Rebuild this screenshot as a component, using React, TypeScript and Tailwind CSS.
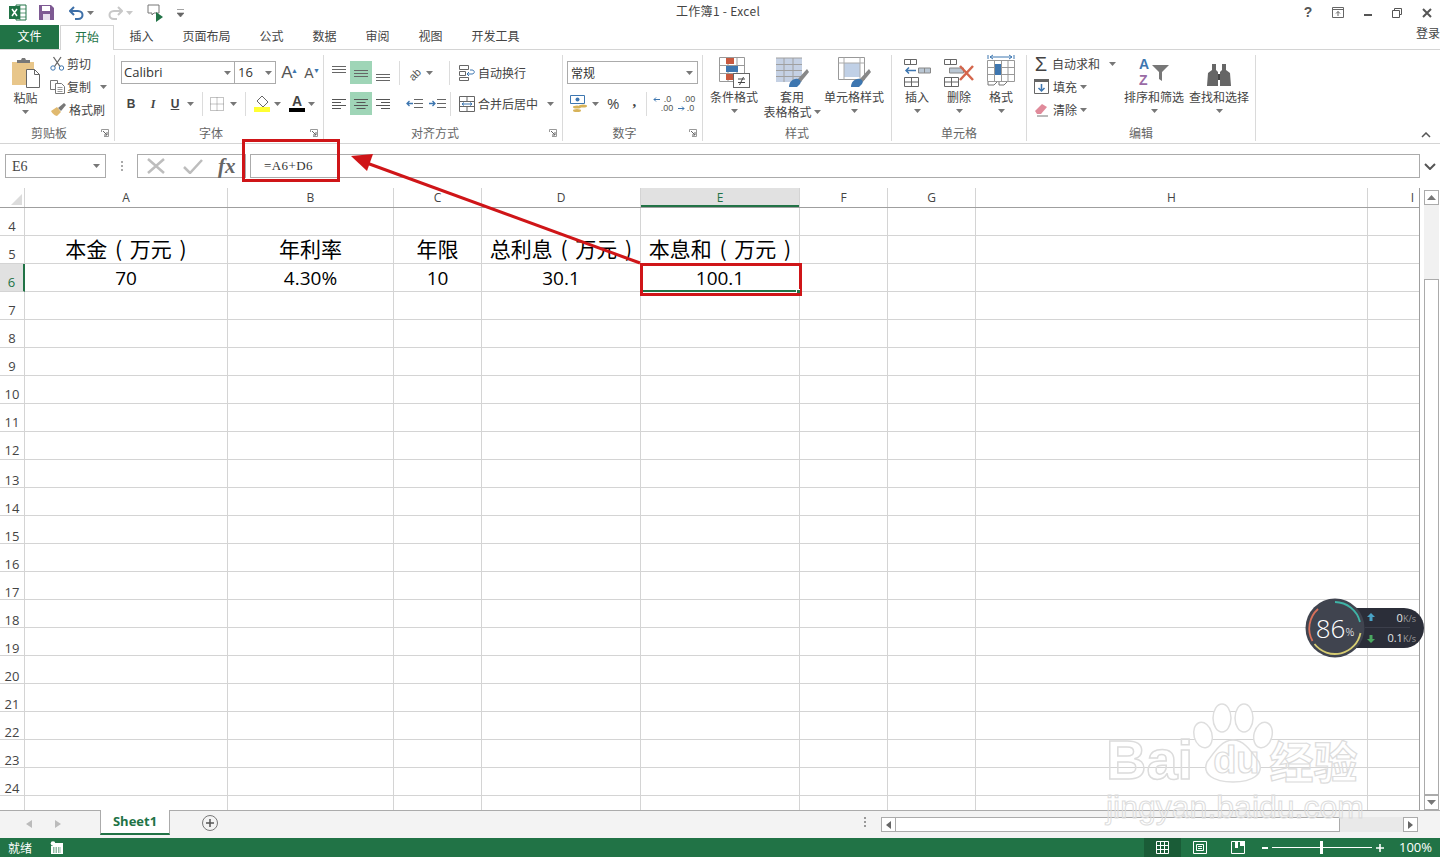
import React from 'react';

const cjk = "font-['Noto_Sans_CJK_SC','Liberation_Sans',sans-serif]";

const Caret = ({ className = '' }: { className?: string }) => (
    <svg width="7" height="4" viewBox="0 0 7 4" className={`shrink-0 ${className}`}>
        <path d="M0 0h7L3.5 4z" fill="#777" />
    </svg>
);

const Sep = ({ h = 24 }: { h?: number }) => <div className="w-px bg-[#dcdcdc]" style={{ height: h }} />;

const Launcher = () => (
    <svg width="8" height="8" viewBox="0 0 8 8" className="absolute right-[5px] bottom-[4px]">
        <path d="M.5 3V.5H7.5M7.5.5V7.5H3" fill="none" stroke="#999" />
        <path d="M2 2l4 4M6 3v3H3" fill="none" stroke="#666" />
    </svg>
);

const Group = ({ label, width, launcher, children }: { label: string; width: number; launcher?: boolean; children: React.ReactNode }) => (
    <div className="relative h-full shrink-0 border-r border-[#dadada] flex flex-col" style={{ width }}>
        <div className="h-[69px] shrink-0">{children}</div>
        <div className={`text-center text-[12px] leading-[16px] text-[#666] mt-px ${launcher ? 'pr-[16px]' : ''}`}>{label}</div>
        {launcher && <Launcher />}
    </div>
);

const Lines = ({ ys, x1 = 0, x2 = 14 }: { ys: number[]; x1?: number; x2?: number }) => (
    <svg width="14" height="16" viewBox="0 0 14 16">
        {ys.map((y) => (
            <path key={y} d={`M${x1} ${y + 0.5}H${x2}`} stroke="#666" />
        ))}
    </svg>
);

const AlignLines = ({ kind }: { kind: 'l' | 'c' | 'r' }) => {
    const rows = [3, 6, 9, 12];
    const lens = [14, 9, 14, 9];
    return (
        <svg width="14" height="16" viewBox="0 0 14 16">
            {rows.map((y, i) => {
                const s = kind === 'l' ? 0 : kind === 'r' ? 14 - lens[i] : (14 - lens[i]) / 2;
                return <path key={y} d={`M${s} ${y + 0.5}h${lens[i]}`} stroke="#555" />;
            })}
        </svg>
    );
};

const AlignCell = ({ active, children }: { active?: boolean; children: React.ReactNode }) => (
    <div className={`w-[22px] h-[23px] flex items-center justify-center ${active ? 'bg-[#9fd5b7]' : ''}`}>{children}</div>
);

const BigBtn = ({ icon, lines, width, caretInline }: { icon: React.ReactNode; lines: string[]; width: number; caretInline?: boolean }) => (
    <div className="flex flex-col items-center shrink-0" style={{ width }}>
        <div className="h-[32px] flex items-end justify-center">{icon}</div>
        <div className="text-[12px] leading-[15px] text-[#444] whitespace-nowrap mt-[1px] text-center">
            {lines.map((l, i) => (
                <div key={l} className="flex items-center justify-center gap-[2px]">
                    {l}
                    {caretInline && i === lines.length - 1 && <Caret />}
                </div>
            ))}
        </div>
        {!caretInline && <Caret className="mt-[5px]" />}
    </div>
);

const CondIcon = () => (
    <svg width="32" height="32" viewBox="0 0 32 32">
        <path d="M1.5 1.5h25v24h-25zM10 1.5v24M19 1.5v24M1.5 9.500h25M1.500 17.500h25" fill="none" stroke="#999" />
        <rect x="8" y="2" width="8" height="6" fill="#c8593f" />
        <rect x="8" y="10" width="12" height="6" fill="#3d76b0" />
        <rect x="8" y="18" width="7" height="6" fill="#c8593f" />
        <rect x="15.500" y="17.500" width="16" height="14" fill="#fff" stroke="#666" />
        <path d="M20 23h7M20 26.500h7M25.500 21l-4 8" stroke="#444" fill="none" />
    </svg>
);

const Brush = () => (
    <>
        <path d="M32 13L22 24l3 3 9-11z" fill="#888" />
        <path d="M14 31c0-5 4-9 9-8 3 1 3 3 2 5l-3 3z" fill="#3d76b0" />
    </>
);

const TableStyleIcon = () => (
    <svg width="34" height="32" viewBox="0 0 34 32">
        <rect x="1" y="2" width="26" height="24" fill="#c5d1e4" />
        <path d="M1 8.500h26M1 14.500h26M1 20.500h26M9 2v24M18 2v24M1 2h26" stroke="#a0a0a0" fill="none" />
        <Brush />
    </svg>
);

const CellStyleIcon = () => (
    <svg width="34" height="32" viewBox="0 0 34 32">
        <path d="M1.500 1.500h26v22h-26z" fill="#fff" stroke="#999" />
        <rect x="7" y="7" width="16" height="14" fill="#c0d0e6" />
        <path d="M7 1.500v22M23 1.500v22M1.500 7h26" stroke="#aaa" />
        <Brush />
    </svg>
);

const InsertIcon = () => (
    <svg width="28" height="30" viewBox="0 0 28 30">
        <path d="M1.500 1.500h12v5h-12zM7.500 1.500v5M1.500 19.500h14v9h-14zM8.500 19.500v9M1.500 24h14" fill="none" stroke="#666" />
        <path d="M13 12.500H3M6 9.500l-3 3 3 3" fill="none" stroke="#3d76b0" strokeWidth="1.500" />
        <path d="M15.500 10h12v5h-12z" fill="#b9c6d3" stroke="#888" />
        <path d="M21.500 10v5" stroke="#888" />
    </svg>
);

const DeleteIcon = () => (
    <svg width="32" height="30" viewBox="0 0 32 30">
        <path d="M1.500 1.500h12v5h-12zM7.500 1.500v5M1.500 19.500h14v9h-14zM8.500 19.500v9M1.500 24h14" fill="none" stroke="#666" />
        <path d="M6.500 10h14v5h-14z" fill="#b9c6d3" stroke="#888" />
        <path d="M17 8l13 14M30 8L17 22" stroke="#d4664c" strokeWidth="2.500" />
    </svg>
);

const FormatIcon = () => (
    <svg width="28" height="34" viewBox="0 0 28 34">
        <path d="M.5 6.500h27v21H.5zM7.500 6.500v21M14.500 6.500v21M21 6.500v21M.5 13.500h27M.5 20.500h27" fill="none" stroke="#999" />
        <rect x="8" y="10" width="6" height="11" fill="#3d76b0" />
        <path d="M1 1v4M27 1v4M3 3h22M3 3l3-2M3 3l3 2M25 3l-3-2M25 3l-3 2" fill="none" stroke="#3d76b0" />
        <path d="M1 28v3h6l3-3M12 28v3h5l3-3" fill="none" stroke="#777" />
    </svg>
);

const SortIcon = () => (
    <svg width="32" height="32" viewBox="0 0 32 32">
        <path d="M14 9h17l-7 7v9l-3-2v-7z" fill="#777" />
        <text x="1" y="13" fontSize="14" fontWeight="700" fill="#3d76b0" fontFamily="'Liberation Sans',sans-serif">A</text>
        <text x="1" y="29" fontSize="14" fontWeight="700" fill="#9a6ba5" fontFamily="'Liberation Sans',sans-serif">Z</text>
    </svg>
);

const BinocularIcon = () => (
    <svg width="26" height="26" viewBox="0 0 26 26">
        <path d="M1 24l1-13 4-3V2h4v6l2 2v14H1zM25 24l-1-13-4-3V2h-4v6l-2 2v14h11z" fill="#666" />
        <path d="M12 12h2v6h-2z" fill="#444" />
    </svg>
);

const PasteIcon = () => (
    <svg width="30" height="32" viewBox="0 0 30 32">
        <rect x="1" y="5" width="22" height="23" fill="#e8c68a" />
        <path d="M6 5V3h4l1-2h3l1 2h4v3H6z" fill="#777" />
        <path d="M15.500 12.500h8l5 5v13h-13z" fill="#fff" stroke="#666" />
        <path d="M23.500 12.500v5h5" fill="none" stroke="#666" />
    </svg>
);

const ScissorsIcon = () => (
    <svg width="15" height="15" viewBox="0 0 15 15">
        <circle cx="3" cy="12" r="2.200" fill="none" stroke="#3d76b0" />
        <circle cx="11.500" cy="12" r="2.200" fill="none" stroke="#3d76b0" />
        <path d="M4.500 10.500L11 1M10 10.500L3.500 1" stroke="#666" strokeWidth="1.300" />
    </svg>
);

const CopyIcon = () => (
    <svg width="15" height="15" viewBox="0 0 15 15">
        <path d="M.5 1.500h7v9h-7z" fill="#fff" stroke="#777" />
        <path d="M5.500 4.500h6l3 3v7h-9z" fill="#fff" stroke="#777" />
        <path d="M7.500 8.500h5M7.500 10.500h5M7.500 12.500h5" stroke="#999" />
    </svg>
);

const PainterIcon = () => (
    <svg width="17" height="15" viewBox="0 0 17 15">
        <path d="M8 6l6-5 2 2-5 6z" fill="#777" />
        <path d="M1 9l6-4 4 5-4 4c-2 0-5-3-6-5z" fill="#e0b96f" />
    </svg>
);

const WrapIcon = () => (
    <svg width="16" height="16" viewBox="0 0 16 16">
        <path d="M.5 .5h9v4h-9zM.5 6.500h6v4h-6zM.5 12.500h9v3h-9z" fill="none" stroke="#666" />
        <path d="M8 9h5c3 0 3-4 0-4h-2M10 7L8 9l2 2" fill="none" stroke="#3d76b0" />
    </svg>
);

const MergeIcon = () => (
    <svg width="16" height="16" viewBox="0 0 16 16">
        <path d="M.5 .5h15v15H.5zM.5 5.500h15M.5 10.500h15M8 .5v5M8 10.500v5" fill="none" stroke="#666" />
        <path d="M3 8h10M5 6.500L3 8l2 1.500M11 6.500L13 8l-2 1.500" fill="none" stroke="#3d76b0" />
    </svg>
);

const IndentIcon = ({ dir }: { dir: 'l' | 'r' }) => (
    <svg width="17" height="14" viewBox="0 0 17 14">
        <path d="M8 2.500h9M8 6.500h9M8 10.500h9" stroke="#666" />
        {dir === 'l' ? (
            <path d="M7 6.500H1M3.500 4L1 6.500 3.500 9" fill="none" stroke="#3d76b0" strokeWidth="1.300" />
        ) : (
            <path d="M0 6.500h6M3.500 4L6 6.500 3.500 9" fill="none" stroke="#3d76b0" strokeWidth="1.300" />
        )}
    </svg>
);

const MoneyIcon = () => (
    <svg width="18" height="18" viewBox="0 0 18 18">
        <path d="M.5 .5h14v8H.5z" fill="#fff" stroke="#3d76b0" />
        <circle cx="7.500" cy="4.500" r="2" fill="#3d76b0" />
        <ellipse cx="7" cy="12" rx="4" ry="1.500" fill="#d7b35a" />
        <ellipse cx="7" cy="15.500" rx="4" ry="1.500" fill="#d7b35a" />
        <ellipse cx="13" cy="11" rx="4" ry="1.500" fill="#d7b35a" />
    </svg>
);

const DecimalIcon = ({ up }: { up: boolean }) => (
    <div className="relative w-[20px] h-[17px] text-[9px] leading-[8px] text-[#555] font-['Liberation_Sans',sans-serif]">
        {up ? (
            <>
                <span className="absolute right-[2px] top-0">.0</span>
                <span className="absolute right-0 top-[9px]">.00</span>
                <svg width="7" height="7" viewBox="0 0 7 7" className="absolute left-0 top-[1px]">
                    <path d="M7 3.500H1M3 1.500L1 3.500l2 2" fill="none" stroke="#3d76b0" />
                </svg>
            </>
        ) : (
            <>
                <span className="absolute right-0 top-0">.00</span>
                <span className="absolute right-[1px] top-[9px]">.0</span>
                <svg width="7" height="7" viewBox="0 0 7 7" className="absolute left-[3px] top-[10px]">
                    <path d="M0 3.500h6M4 1.500l2 2-2 2" fill="none" stroke="#3d76b0" />
                </svg>
            </>
        )}
    </div>
);

const Ribbon = () => (
    <div className={`h-[94px] flex items-stretch pt-[5px] pb-[2px] border-b border-[#d4d4d4] ${cjk} relative`}>
        {/* 剪贴板 */}
        <Group label="剪贴板" width={115} launcher>
            <div className="flex">
                <div className="w-[50px] flex flex-col items-center pl-[1px] pt-[2px]">
                    <PasteIcon />
                    <div className="text-[12px] leading-[16px] text-[#444] mt-[1px]">粘贴</div>
                    <Caret className="mt-[4px]" />
                </div>
                <div className="flex flex-col text-[12px] text-[#444] -mt-[3px]">
                    <div className="h-[23px] flex items-center gap-[2px]"><ScissorsIcon />剪切</div>
                    <div className="h-[23px] flex items-center gap-[2px]"><CopyIcon />复制<Caret className="ml-[7px]" /></div>
                    <div className="h-[23px] flex items-center gap-[2px]"><PainterIcon />格式刷</div>
                </div>
            </div>
        </Group>
        {/* 字体 */}
        <Group label="字体" width={209} launcher>
            <div className="pl-[6px] pt-[6px]">
                <div className="flex items-center h-[23px]">
                    <div className="w-[114px] h-[23px] border border-[#ababab] flex items-center justify-between pl-[2px] pr-[3px] text-[13px] text-[#333] font-['Open_Sans',sans-serif]">Calibri<Caret /></div>
                    <div className="w-[41px] h-[23px] border border-l-0 border-[#ababab] flex items-center justify-between pl-[3px] pr-[3px] text-[13px] text-[#333] font-['Open_Sans',sans-serif]">16<Caret /></div>
                    <span className="w-[22px] text-center text-[17px] leading-[20px] text-[#555] font-['Liberation_Sans',sans-serif] relative">A<span className="absolute top-[-2px] right-[0px] text-[7px] text-[#3d76b0]">▲</span></span>
                    <span className="w-[22px] text-center text-[14px] leading-[20px] text-[#555] font-['Liberation_Sans',sans-serif] relative">A<span className="absolute top-[-2px] right-[0px] text-[7px] text-[#3d76b0]">▼</span></span>
                </div>
                <div className="flex items-center h-[23px] mt-[8px] pl-[4px] text-[#444] font-['Liberation_Sans',sans-serif] text-[12px]">
                    <span className="w-[12px] text-center font-bold">B</span>
                    <span className="w-[12px] text-center italic ml-[10px] font-['Liberation_Serif',serif] font-bold">I</span>
                    <span className="w-[12px] text-center underline font-bold ml-[10px]">U</span>
                    <Caret className="ml-[6px]" />
                    <div className="ml-[8px]"><Sep /></div>
                    <svg width="14" height="14" viewBox="0 0 14 14" className="ml-[7px]">
                        <path d="M.5 .5h13v13H.5zM7 .5v13M.5 7h13" fill="none" stroke="#888" strokeDasharray="1 1" />
                    </svg>
                    <Caret className="ml-[6px]" />
                    <div className="ml-[8px]"><Sep /></div>
                    <svg width="17" height="17" viewBox="0 0 17 17" className="ml-[8px]">
                        <rect x="0" y="12" width="16" height="5" fill="#ffff33" />
                        <path d="M8 1l6 6-5 5-6-6z" fill="#fff" stroke="#666" />
                    </svg>
                    <Caret className="ml-[3px]" />
                    <div className="ml-[8px] flex flex-col items-center w-[16px]">
                        <span className="text-[14px] leading-[13px] font-bold text-[#444]">A</span>
                        <div className="w-[16px] h-[4px] bg-black" />
                    </div>
                    <Caret className="ml-[3px]" />
                </div>
            </div>
        </Group>
        {/* 对齐方式 */}
        <Group label="对齐方式" width={239} launcher>
            <div className="pl-[4px] pt-[6px]">
                <div className="flex items-center h-[23px]">
                    <AlignCell><Lines ys={[1, 4, 7]} /></AlignCell>
                    <AlignCell active><Lines ys={[5, 8, 11]} /></AlignCell>
                    <AlignCell><Lines ys={[9, 12, 15]} /></AlignCell>
                    <div className="ml-[5px]"><Sep /></div>
                    <span className="ml-[8px] w-[16px] text-[11px] leading-[16px] text-[#555] -rotate-45 font-['Liberation_Sans',sans-serif]">ab</span>
                    <Caret className="ml-[2px]" />
                    <div className="ml-[16px]"><Sep /></div>
                    <div className="ml-[9px] flex items-center gap-[3px] text-[12px] text-[#444] whitespace-nowrap"><WrapIcon />自动换行</div>
                </div>
                <div className="flex items-center h-[23px] mt-[8px]">
                    <AlignCell><AlignLines kind="l" /></AlignCell>
                    <AlignCell active><AlignLines kind="c" /></AlignCell>
                    <AlignCell><AlignLines kind="r" /></AlignCell>
                    <div className="ml-[5px] w-px h-[24px]" />
                    <div className="ml-[6px]"><IndentIcon dir="l" /></div>
                    <div className="ml-[6px]"><IndentIcon dir="r" /></div>
                    <div className="ml-[4px]"><Sep /></div>
                    <div className="ml-[8px] flex items-center gap-[3px] text-[12px] text-[#444] whitespace-nowrap"><MergeIcon />合并后居中<Caret className="ml-[6px]" /></div>
                </div>
            </div>
        </Group>
        {/* 数字 */}
        <Group label="数字" width={140} launcher>
            <div className="pl-[4px] pt-[6px]">
                <div className="w-[131px] h-[23px] border border-[#ababab] flex items-center justify-between pl-[3px] pr-[4px] text-[12px] text-[#333]">常规<Caret /></div>
                <div className="flex items-center h-[23px] mt-[8px] pl-[3px] text-[#444]">
                    <MoneyIcon />
                    <Caret className="ml-[4px]" />
                    <span className="ml-[8px] text-[15px] font-['Open_Sans',sans-serif]">%</span>
                    <span className="ml-[13px] text-[15px] font-bold font-['Liberation_Serif',serif] -mt-[5px]">,</span>
                    <div className="ml-[10px]"><Sep /></div>
                    <div className="ml-[6px]"><DecimalIcon up /></div>
                    <div className="ml-[2px]"><DecimalIcon up={false} /></div>
                </div>
            </div>
        </Group>
        {/* 样式 */}
        <Group label="样式" width={189}>
            <div className="flex pl-[1px] pt-[1px]">
                <BigBtn icon={<CondIcon />} lines={['条件格式']} width={60} />
                <BigBtn icon={<TableStyleIcon />} lines={['套用', '表格格式']} width={56} caretInline />
                <BigBtn icon={<CellStyleIcon />} lines={['单元格样式']} width={68} />
            </div>
        </Group>
        {/* 单元格 */}
        <Group label="单元格" width={135}>
            <div className="flex pl-[4px] pt-[1px]">
                <BigBtn icon={<InsertIcon />} lines={['插入']} width={42} />
                <BigBtn icon={<DeleteIcon />} lines={['删除']} width={42} />
                <BigBtn icon={<FormatIcon />} lines={['格式']} width={42} />
            </div>
        </Group>
        {/* 编辑 */}
        <Group label="编辑" width={229}>
            <div className="flex pl-[6px] pt-[1px]">
                <div className="w-[88px] flex flex-col text-[12px] text-[#444] -mt-[4px]">
                    <div className="h-[23px] flex items-center gap-[3px]">
                        <span className="w-[16px] text-[20px] leading-[20px] text-[#444] text-center font-['Liberation_Sans',sans-serif]">Σ</span>自动求和<Caret className="ml-[6px]" />
                    </div>
                    <div className="h-[23px] flex items-center gap-[3px]">
                        <svg width="15" height="15" viewBox="0 0 15 15" className="mx-[1px]">
                            <path d="M.5 .5h14v14H.5z" fill="#fff" stroke="#666" />
                            <rect width="15" height="3" fill="#666" />
                            <path d="M7.500 5v7M4.500 9l3 3 3-3" fill="none" stroke="#3d76b0" strokeWidth="1.500" />
                        </svg>
                        填充<Caret />
                    </div>
                    <div className="h-[23px] flex items-center gap-[3px]">
                        <svg width="15" height="15" viewBox="0 0 15 15" className="mx-[1px]">
                            <path d="M1 9l7-7 5 3-6 7H3z" fill="#e08a9a" />
                            <path d="M3 14h11" stroke="#777" />
                        </svg>
                        清除<Caret />
                    </div>
                </div>
                <BigBtn icon={<SortIcon />} lines={['排序和筛选']} width={66} />
                <BigBtn icon={<BinocularIcon />} lines={['查找和选择']} width={64} />
            </div>
        </Group>
        <svg width="10" height="6" viewBox="0 0 10 6" className="absolute right-[9px] bottom-[5px]">
            <path d="M1 5l4-4 4 4" fill="none" stroke="#555" strokeWidth="1.500" />
        </svg>
    </div>
);

const TitleBar = () => (
    <div className={`h-[25px] flex items-center relative ${cjk}`}>
        <svg width="18" height="17" viewBox="0 0 18 17" className="ml-[9px]">
            <path d="M7 1h10v15H7z" fill="#fff" stroke="#217346" />
            <path d="M11 1v15M7 5h10M7 9h10M7 13h10" stroke="#217346" strokeWidth=".7" />
            <rect x="0" y="2" width="11" height="13" fill="#217346" />
            <path d="M3 5l5 7M8 5l-5 7" stroke="#fff" strokeWidth="1.500" />
        </svg>
        <svg width="15" height="15" viewBox="0 0 15 15" className="ml-[12px]">
            <path d="M0 0h12l3 3v12H0z" fill="#7e5a93" />
            <rect x="3" y="1" width="8" height="5" fill="#fff" />
            <rect x="4" y="9" width="7" height="6" fill="#e8e0ee" />
        </svg>
        <svg width="15" height="14" viewBox="0 0 15 14" className="ml-[15px]">
            <path d="M1 5h8c6 0 6 8 0 8H6" fill="none" stroke="#3d6fa8" strokeWidth="2" />
            <path d="M5 1L1 5l4 4" fill="none" stroke="#3d6fa8" strokeWidth="2" />
        </svg>
        <Caret className="ml-[3px]" />
        <svg width="15" height="14" viewBox="0 0 15 14" className="ml-[14px]">
            <path d="M14 5H6c-6 0-6 8 0 8h3" fill="none" stroke="#c8c8c8" strokeWidth="2" />
            <path d="M10 1l4 4-4 4" fill="none" stroke="#c8c8c8" strokeWidth="2" />
        </svg>
        <Caret className="ml-[3px] opacity-40" />
        <svg width="17" height="18" viewBox="0 0 17 18" className="ml-[14px]">
            <path d="M1 1h11v8H7l-2 2V9H1z" fill="#fff" stroke="#777" />
            <path d="M9 8l7 5-7 5z" fill="#217346" />
        </svg>
        <svg width="7" height="8" viewBox="0 0 7 8" className="ml-[13px]">
            <path d="M0 .5h7M0 4h7L3.500 8z" fill="#666" stroke="#666" strokeWidth=".6" />
        </svg>
        <div className="absolute left-[676px] top-[2px] text-[12px] tracking-[0.3px] leading-[18px] text-[#444]">工作簿1 - Excel</div>
        <div className="ml-auto flex items-center text-[#555]">
            <span className="w-[30px] text-center text-[14px] font-bold font-['Liberation_Sans',sans-serif]">?</span>
            <svg width="12" height="11" viewBox="0 0 12 11" className="mx-[9px]">
                <path d="M.5 .5h11v10H.5zM.5 2.500h11M6 9V4.500M4 6.500l2-2 2 2" fill="none" stroke="#666" />
            </svg>
            <div className="w-[8px] h-[2px] bg-[#555] mx-[11px] mt-[5px]" />
            <svg width="10" height="10" viewBox="0 0 10 10" className="mx-[9px]">
                <path d="M2.500 2.500V.5h7v6h-2M.5 2.500h7v7h-7z" fill="none" stroke="#555" />
            </svg>
            <svg width="10" height="10" viewBox="0 0 10 10" className="ml-[11px] mr-[8px]">
                <path d="M1 1l8 8M9 1L1 9" stroke="#555" strokeWidth="2" />
            </svg>
        </div>
    </div>
);

const TabRow = () => {
    const tabs = ['插入', '页面布局', '公式', '数据', '审阅', '视图', '开发工具'];
    return (
        <div className={`h-[25px] flex items-stretch border-b border-[#d4d4d4] text-[12px] text-[#444] ${cjk}`}>
            <div className="w-[59px] bg-[#217346] text-white flex items-center justify-center pb-[3px]">文件</div>
            <div className="w-[54px] ml-[1px] -mb-px bg-white border border-b-0 border-[#d4d4d4] text-[#217346] flex items-center justify-center pb-[3px]">开始</div>
            <div className="flex ml-[1px]">
                {tabs.map((t) => (
                    <div key={t} className="px-[14.5px] flex items-center pb-[3px]">{t}</div>
                ))}
            </div>
            <div className="ml-auto pr-[0px] -mt-[9px] flex items-center">登录</div>
        </div>
    );
};

const FormulaBar = () => (
    <div className="h-[24px] mt-[10px] flex items-stretch pl-[5px] pr-[0px]">
        <div className="w-[101px] border border-[#ababab] flex items-center justify-between pl-[6px] pr-[5px] font-['Liberation_Serif',serif] text-[14px] text-[#444]">E6<Caret /></div>
        <div className="w-[31px] flex flex-col items-center justify-center gap-[2px]">
            <div className="w-[2px] h-[2px] bg-[#aaa]" />
            <div className="w-[2px] h-[2px] bg-[#aaa]" />
            <div className="w-[2px] h-[2px] bg-[#aaa]" />
        </div>
        <div className="w-[109px] border border-[#ababab] flex items-center pl-[9px]">
            <svg width="18" height="16" viewBox="0 0 18 16" className="shrink-0"><path d="M1 1l16 14M17 1L1 15" stroke="#bdbdbd" strokeWidth="2.500" /></svg>
            <svg width="20" height="16" viewBox="0 0 20 16" className="ml-[18px] shrink-0"><path d="M1 9l6 6L19 2" fill="none" stroke="#bdbdbd" strokeWidth="2.500" /></svg>
            <span className="ml-[15px] text-[21px] leading-[21px] italic font-bold text-[#666] font-['Liberation_Serif',serif]">fx</span>
        </div>
        <div className="ml-[4px] flex-1 border border-[#ababab] flex items-center pl-[13px] font-['Liberation_Serif',serif] tracking-[0.4px] text-[13px] text-[#333]">=A6+D6</div>
        <div className="w-[20px] flex items-center justify-center">
            <svg width="12" height="7" viewBox="0 0 12 7"><path d="M1 1l5 5 5-5" fill="none" stroke="#555" strokeWidth="2" /></svg>
        </div>
    </div>
);

const columns = ['A', 'B', 'C', 'D', 'E', 'F', 'G', 'H', 'I'];
const rowNums = Array.from({ length: 21 }, (_, i) => i + 4);
const rowData: Record<number, string[]> = {
    5: ['本金 ( 万元 )', '年利率', '年限', '总利息 ( 万元 )', '本息和 ( 万元 )'],
    6: ['70', '4.30%', '10', '30.1', '100.1'],
};
const template = 'grid-cols-[25px_203px_166px_88px_159px_159px_88px_88px_392px_52px]';

const Sheet = () => (
    <div className="flex-1 min-h-0 flex mt-[10px] overflow-hidden">
        <div className="w-[1420px] shrink-0 overflow-hidden border-r border-[#9f9f9f]">
            <div className={`grid ${template} h-[20px] border-b border-[#9f9f9f] bg-white`}>
                <div className="relative border-r border-[#d4d4d4]">
                    <div className="absolute right-[2px] bottom-[2px] w-0 h-0 border-l-[11px] border-l-transparent border-b-[11px] border-b-[#dcdcdc]" />
                </div>
                {columns.map((c) => (
                    <div key={c} className={`flex items-center pt-[1px] text-[12px] font-['Open_Sans',sans-serif] border-r border-[#d4d4d4] ${c === 'I' ? 'justify-end pr-[5px]' : 'justify-center'} ${c === 'E' ? 'bg-[#e1e1e1] text-[#217346] shadow-[inset_0_-2px_0_#217346]' : 'text-[#444]'}`}>{c}</div>
                ))}
            </div>
            {rowNums.map((r) => (
                <div key={r} className={`grid ${template} h-[28px]`}>
                    <div className={`flex items-center justify-center text-[13px] leading-[14px] border-r border-b font-['Open_Sans',sans-serif] ${r >= 13 ? 'pt-[13px]' : 'pt-[9px]'} ${r === 6 ? 'bg-[#e1e1e1] text-[#217346] border-r-[#217346] border-r-2 border-b-[#d4d4d4]' : 'text-[#444] border-[#d4d4d4]'}`}>{r}</div>
                    {columns.map((c, i) => {
                        const v = rowData[r]?.[i];
                        return (
                            <div key={c} className={`border-r border-b border-[#d4d4d4] flex items-center justify-center whitespace-nowrap text-black ${r === 5 ? `text-[21px] leading-[24px] pb-[3px] [word-spacing:3px] ${cjk}` : "text-[19px] leading-[24px] font-['Open_Sans',sans-serif]"}`}>
                                {v}
                            </div>
                        );
                    })}
                </div>
            ))}
            <div className={`grid ${template} h-[14px]`}>
                <div className="border-r border-[#d4d4d4]" />
                {columns.map((c) => <div key={c} className="border-r border-[#d4d4d4]" />)}
            </div>
        </div>
        {/* vertical scrollbar */}
        <div className="flex-1 flex flex-col items-center pt-[2px] pl-[2px]">
            <div className="h-[15px] w-[15px] bg-white border border-[#ababab] flex items-center justify-center shrink-0">
                <svg width="9" height="5" viewBox="0 0 9 5"><path d="M0 5h9L4.500 0z" fill="#777" /></svg>
            </div>
            <div className="h-[74px] w-[15px] bg-[#f1f1f1] shrink-0" />
            <div className="w-[15px] flex-1 bg-white border border-[#ababab]" />
            <div className="h-[15px] w-[15px] bg-white border border-[#ababab] flex items-center justify-center shrink-0">
                <svg width="9" height="5" viewBox="0 0 9 5"><path d="M0 0h9L4.500 5z" fill="#777" /></svg>
            </div>
        </div>
    </div>
);

const SheetTabs = () => (
    <div className="h-[28px] flex items-start bg-[#f3f3f3] border-t border-[#ababab]">
        <svg width="6" height="8" viewBox="0 0 6 8" className="ml-[26px] mt-[9px]"><path d="M6 0v8L0 4z" fill="#bbb" /></svg>
        <svg width="6" height="8" viewBox="0 0 6 8" className="ml-[23px] mt-[9px]"><path d="M0 0v8l6-4z" fill="#bbb" /></svg>
        <div className="ml-[39px] -mt-px w-[70px] h-[25px] bg-white border-x border-[#ababab] border-b-2 border-b-[#217346] flex items-center justify-center text-[13px] font-bold text-[#217346] font-['Open_Sans',sans-serif]">Sheet1</div>
        <div className="ml-[32px] mt-[4px] w-[16px] h-[16px] rounded-full border border-[#777] flex items-center justify-center text-[#555]">
            <svg width="8" height="8" viewBox="0 0 8 8"><path d="M4 0v8M0 4h8" stroke="#555" strokeWidth="1.500" /></svg>
        </div>
        <div className="ml-[646px] mt-[6px] flex flex-col gap-[2px]">
            <div className="w-[2px] h-[2px] bg-[#999]" />
            <div className="w-[2px] h-[2px] bg-[#999]" />
            <div className="w-[2px] h-[2px] bg-[#999]" />
        </div>
        <div className="ml-[15px] mt-[6px] w-[537px] h-[15px] flex">
            <div className="w-[15px] h-[15px] bg-white border border-[#ababab] flex items-center justify-center">
                <svg width="5" height="8" viewBox="0 0 5 8"><path d="M5 0v8L0 4z" fill="#666" /></svg>
            </div>
            <div className="w-[444px] h-[15px] bg-white border-y border-r border-[#ababab]" />
            <div className="flex-1 bg-[#e9e9e9]" />
            <div className="w-[15px] h-[15px] bg-white border border-[#ababab] flex items-center justify-center">
                <svg width="5" height="8" viewBox="0 0 5 8"><path d="M0 0v8l5-4z" fill="#666" /></svg>
            </div>
        </div>
    </div>
);

const StatusBar = () => (
    <div className={`h-[19px] bg-[#217346] flex items-center text-white text-[12px] ${cjk}`}>
        <span className="ml-[8px]">就绪</span>
        <svg width="13" height="13" viewBox="0 0 13 13" className="ml-[18px]">
            <path d="M3 2h10v11H1V5h2z" fill="#fff" />
            <circle cx="3" cy="2.500" r="2.300" fill="#fff" />
            <path d="M3 7h8M3 9h8M3 11h8" stroke="#217346" strokeDasharray="1.500 1" />
        </svg>
        <div className="ml-auto flex items-center h-full">
            <div className="w-[37px] h-full bg-[#1a5c37] flex items-center justify-center">
                <svg width="13" height="13" viewBox="0 0 13 13"><path d="M.5 .5h12v12H.5zM4.500 .5v12M8.500 .5v12M.5 4.500h12M.5 8.500h12" fill="none" stroke="#fff" /></svg>
            </div>
            <div className="w-[38px] flex items-center justify-center">
                <svg width="14" height="13" viewBox="0 0 14 13"><path d="M.5 .5h13v12H.5z" fill="none" stroke="#fff" /><path d="M3.500 3.500h7v6h-7zM5 5.500h4M5 7.500h4" fill="none" stroke="#fff" /></svg>
            </div>
            <div className="w-[38px] flex items-center justify-center">
                <svg width="14" height="13" viewBox="0 0 14 13"><path d="M.5 .5h13v12H.5z" fill="none" stroke="#fff" /><rect x="4" y="0" width="3" height="7" fill="#fff" /><rect x="9" y="0" width="5" height="5" fill="#fff" /></svg>
            </div>
            <div className="ml-[5px] w-[6px] h-[2px] bg-white" />
            <div className="ml-[4px] w-[100px] h-px bg-white relative">
                <div className="absolute left-[48px] -top-[6px] w-[3px] h-[13px] bg-white" />
            </div>
            <svg width="8" height="8" viewBox="0 0 8 8" className="ml-[4px]"><path d="M4 0v8M0 4h8" stroke="#fff" strokeWidth="1.600" /></svg>
            <span className="w-[56px] text-right pr-[8px] text-[13px] font-['Open_Sans',sans-serif]">100%</span>
        </div>
    </div>
);

const SpeedWidget = () => (
    <div className="absolute left-[1305px] top-[598px] w-[119px] h-[60px]">
        <div className="absolute left-[28px] top-[10px] w-[91px] h-[40px] rounded-full bg-[#2b2e39]" />
        <div className="absolute left-[63px] top-[13px] w-[48px] text-right text-[11px] leading-[14px] text-[#e4e4e4] font-['Open_Sans',sans-serif]">0<span className="text-[#999] text-[9px]">K/s</span></div>
        <div className="absolute left-[63px] top-[33px] w-[48px] text-right text-[11px] leading-[14px] text-[#e4e4e4] font-['Open_Sans',sans-serif]">0.1<span className="text-[#999] text-[9px]">K/s</span></div>
        <div className="absolute left-[60px] top-[29px] w-[45px] h-px bg-[#3c3f4b]" />
        <svg width="8" height="8" viewBox="0 0 8 8" className="absolute left-[62px] top-[15px]"><path d="M4 0L0 4h2.500v4h3V4H8z" fill="#4aa3c7" /></svg>
        <svg width="8" height="8" viewBox="0 0 8 8" className="absolute left-[62px] top-[37px]"><path d="M4 8L0 4h2.500V0h3v4H8z" fill="#4aa860" /></svg>
        <svg width="60" height="60" viewBox="0 0 60 60" className="absolute left-0 top-0">
            <circle cx="30" cy="30" r="29.500" fill="#40444f" />
            <path d="M30 4a26 26 0 0 1 25 20" fill="none" stroke="#3fb3a6" strokeWidth="1.800" />
            <path d="M55.500 35a26 26 0 0 1-46 11" fill="none" stroke="#d6cc72" strokeWidth="1.800" />
            <path d="M7.500 43A26 26 0 0 1 13 11" fill="none" stroke="#d8705a" strokeWidth="1.800" />
        </svg>
        <div className="absolute left-0 top-0 w-[60px] h-[60px] flex items-center justify-center text-white text-[26px] font-light font-['Open_Sans',sans-serif]">
            86<span className="text-[11px] mt-[9px]">%</span>
        </div>
    </div>
);

const Watermark = () => (
    <div className="absolute left-[1106px] top-[700px] w-[260px] h-[130px] pointer-events-none">
        <svg width="84" height="84" viewBox="0 0 84 84" className="absolute left-[85px] top-[2px]">
            <g fill="#fff" stroke="#dedede" strokeWidth="1.500">
                <ellipse cx="12" cy="33" rx="9" ry="13" transform="rotate(-15 12 33)" />
                <ellipse cx="31" cy="16" rx="9" ry="14" />
                <ellipse cx="53" cy="16" rx="9" ry="14" />
                <ellipse cx="72" cy="33" rx="9" ry="13" transform="rotate(15 72 33)" />
                <path d="M42 38c-12 0-20 14-26 22-5 12 6 20 26 20s31-8 26-20c-6-8-14-22-26-22z" />
            </g>
        </svg>
        <div className="absolute left-0 top-[30px] flex items-center text-transparent [-webkit-text-stroke:1.5px_#dcdcdc] font-['Liberation_Sans',sans-serif] font-bold text-[56px] leading-[60px]">
            <span>Bai</span>
            <span className="ml-[20px] text-[38px] font-bold [-webkit-text-stroke:1.2px_#dcdcdc]">du</span>
            <span className={`ml-[10px] text-[44px] [-webkit-text-stroke:1.2px_#dcdcdc] ${cjk}`}>经验</span>
        </div>
        <div className="absolute left-0 top-[88px] text-transparent [-webkit-text-stroke:1px_#dcdcdc] font-['Liberation_Sans',sans-serif] text-[32px] leading-[38px] whitespace-nowrap">jingyan.baidu.com</div>
    </div>
);

const Annotations = () => (
    <>
        <div className="absolute left-[242px] top-[139px] w-[98px] h-[43px] border-[3px] border-[#cf1518] pointer-events-none" />
        <div className="absolute left-[643px] top-[290px] w-[156px] h-[2px] bg-[#217346] pointer-events-none" />
        <div className="absolute left-[640px] top-[263px] w-[162px] h-[33px] border-[3px] border-[#cf1518] pointer-events-none" />
        <svg width="1440" height="857" viewBox="0 0 1440 857" className="absolute left-0 top-0 pointer-events-none">
            <path d="M640 263L364 162" stroke="#cf1518" strokeWidth="3" />
            <path d="M351 156l22-2-6 17z" fill="#cf1518" />
            <rect x="796" y="289" width="4" height="4" fill="#fff" />
            <rect x="797" y="290" width="3" height="3" fill="#217346" />
        </svg>
    </>
);

export default function App() {
    return (
        <div className={`relative w-[1440px] h-[857px] overflow-hidden bg-white flex flex-col ${cjk}`}>
            <TitleBar />
            <TabRow />
            <Ribbon />
            <FormulaBar />
            <Sheet />
            <SheetTabs />
            <StatusBar />
            <Watermark />
            <SpeedWidget />
            <Annotations />
        </div>
    );
}
